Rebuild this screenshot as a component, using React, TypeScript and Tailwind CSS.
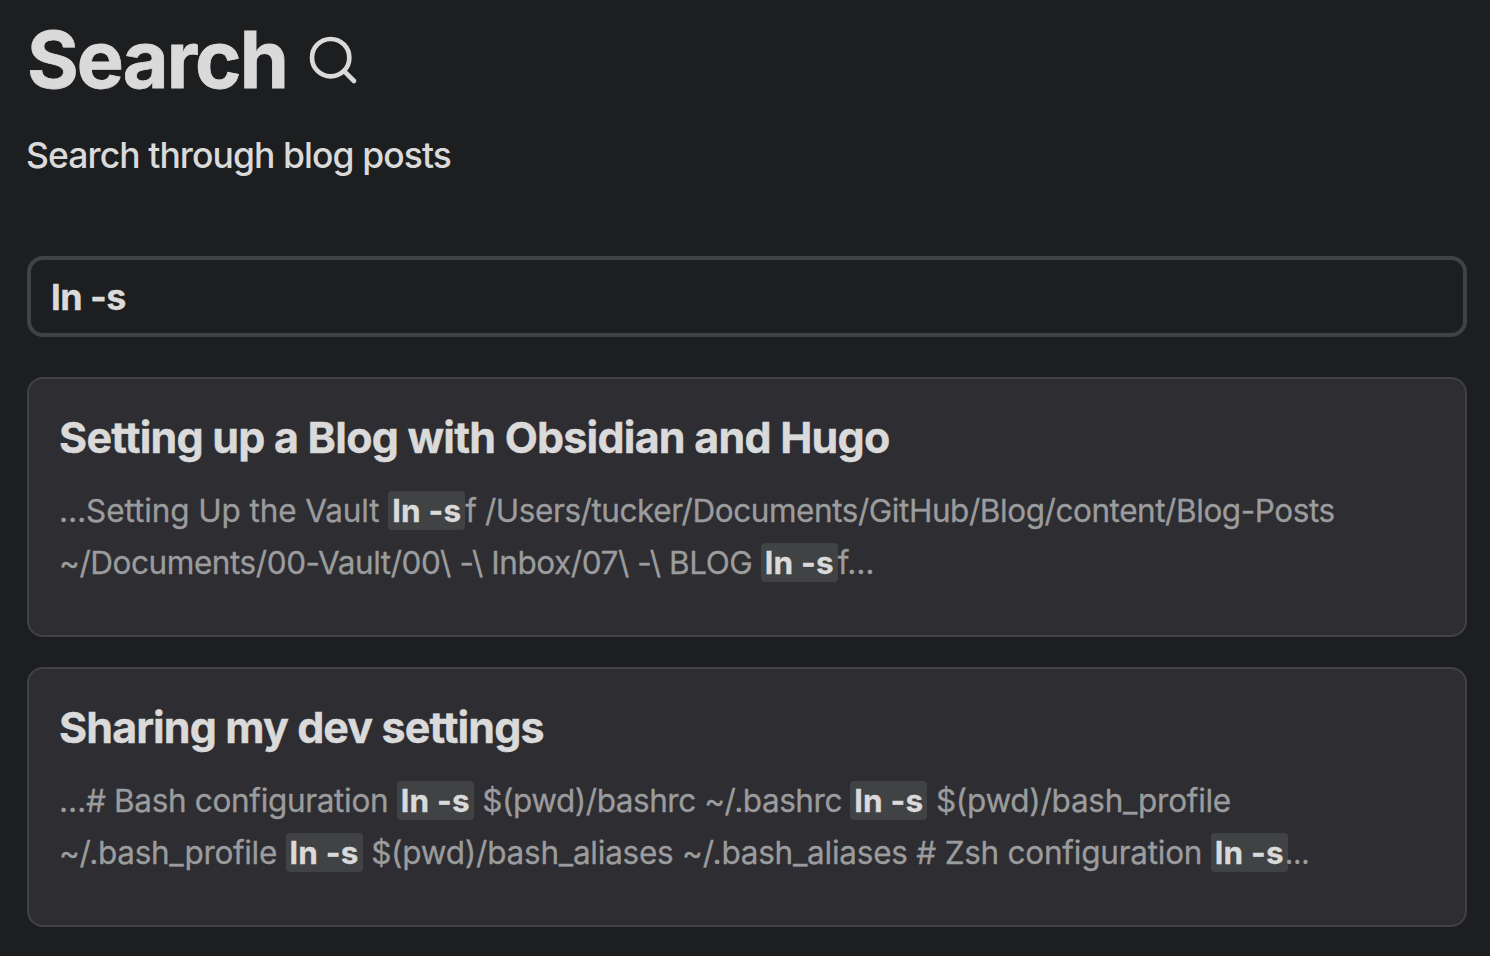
import type { ReactNode } from "react";

function Mark({ children }: { children: ReactNode }) {
  return (
    <mark className="rounded-[4px] bg-[#414244] px-[4px] py-0 font-bold tracking-[0.2px] text-[#dadadb]">{children}</mark>
  );
}

function Result({ title, titleClass, children }: { title: string; titleClass: string; children: ReactNode }) {
  return (
    <article className="h-[260px] rounded-2xl border-2 border-[#414244] bg-[#2e2d32] px-[30px] pt-[28px]">
      <h2 className={`text-[43px] leading-[60px] font-bold [-webkit-text-stroke:0.4px] ${titleClass}`}>{title}</h2>
      <div className="mt-[18px] text-[31.5px] leading-[52px] whitespace-nowrap text-[#9b9c9d] [-webkit-text-stroke:0.3px]">{children}</div>
    </article>
  );
}

export default function App() {
  return (
    <main className="h-[956px] overflow-hidden bg-[#1d1e20] pr-[23px] pl-[27px] font-['Inter',sans-serif] text-[#dadadb]">
      <header className="flex h-[120px] items-center gap-[18px]">
        <h1 className="-mt-[2px] text-[79px] leading-[120px] font-bold tracking-[-1.9px] [-webkit-text-stroke:0.8px]">Search</h1>
        <svg className="h-[56px] w-[56px]" viewBox="0 0 24 24" fill="none" stroke="currentColor" strokeWidth="2" strokeLinecap="round" strokeLinejoin="round">
          <circle cx="11" cy="11" r="8" />
          <path d="m21 21-4.35-4.35" />
        </svg>
      </header>
      <p className="mt-[8px] -ml-px text-[35.5px] leading-[56px] font-medium tracking-[-0.92px]">Search through blog posts</p>
      <div className="mt-[72px] flex h-[81px] items-center rounded-2xl border-4 border-[#414244] px-[20px] text-[36px] font-bold tracking-[-0.6px] [-webkit-text-stroke:0.3px]">ln -s</div>
      <section className="mt-[40px] flex flex-col gap-[30px]">
        <Result title="Setting up a Blog with Obsidian and Hugo" titleClass="tracking-[-0.78px]">
          <p className="tracking-[-0.44px]"><span className="tracking-[-0.1px]">…Setting Up the Vault </span><Mark>ln -s</Mark>f /Users/tucker/Documents/GitHub/Blog/content/Blog-Posts</p>
          <p className="tracking-[-0.44px]">~/Documents/00-Vault/00\ -\ Inbox/07\ -\ BLOG <Mark>ln -s</Mark>f…</p>
        </Result>
        <Result title="Sharing my dev settings" titleClass="tracking-[-0.9px]">
          <p className="tracking-[-0.29px]"><span className="tracking-[-0.33px]">…# Bash configuration </span><Mark>ln -s</Mark><span className="tracking-[-0.46px]"> $(pwd)/bashrc ~/.bashrc </span><Mark>ln -s</Mark> $(pwd)/bash_profile</p>
          <p className="tracking-[-0.24px]"><span className="tracking-[-0.32px]">~/.bash_profile </span><Mark>ln -s</Mark> $(pwd)/bash_aliases ~/.bash_aliases # Zsh configuration <Mark>ln -s</Mark><span className="-ml-[3px] inline-block origin-left scale-x-90">…</span></p>
        </Result>
      </section>
    </main>
  );
}
